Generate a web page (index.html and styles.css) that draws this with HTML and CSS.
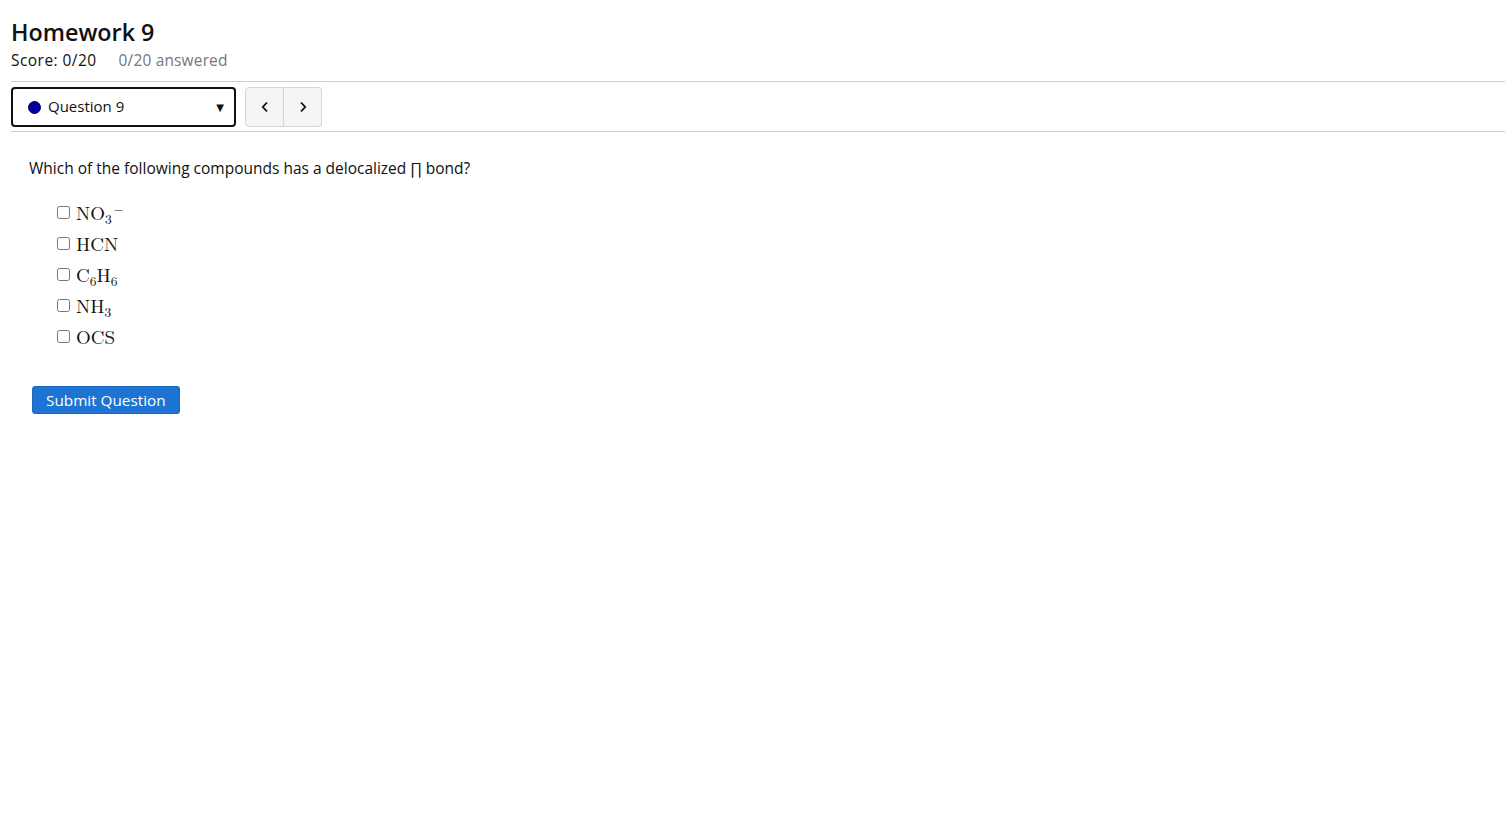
FILE: index.html
```html
<!DOCTYPE html>
<html>
<head>
<meta charset="utf-8">
<link rel="stylesheet" href="styles.css">
</head>
<body>
<div class="page">
  <header class="head">
    <h1 class="title">Homework 9</h1>
    <div class="scoreline">
      <span class="score">Score: 0/20</span>
      <span class="answered">0/20 answered</span>
    </div>
  </header>
  <div class="navbar">
    <div class="qselect">
      <span class="dot"></span>
      <span class="qlabel">Question 9</span>
      <span class="caret">&#9660;</span>
    </div>
    <div class="navbtns">
      <button class="navbtn" aria-label="previous">
        <svg width="10" height="12" viewBox="0 0 10 12"><path d="M7 1.5 L2.8 6 L7 10.5" fill="none" stroke="#111" stroke-width="1.8"/></svg>
      </button>
      <button class="navbtn" aria-label="next">
        <svg width="10" height="12" viewBox="0 0 10 12"><path d="M3 1.5 L7.2 6 L3 10.5" fill="none" stroke="#111" stroke-width="1.8"/></svg>
      </button>
    </div>
  </div>
  <main class="question">
    <p class="prompt">Which of the following compounds has a delocalized ∏ bond?</p>
    <ul class="choices">
      <li class="choice"><input type="checkbox"><span class="math">NO<sub>3</sub><sup>−</sup></span></li>
      <li class="choice"><input type="checkbox"><span class="math">HCN</span></li>
      <li class="choice"><input type="checkbox"><span class="math">C<sub>6</sub>H<sub>6</sub></span></li>
      <li class="choice"><input type="checkbox"><span class="math">NH<sub>3</sub></span></li>
      <li class="choice"><input type="checkbox"><span class="math">OCS</span></li>
    </ul>
    <button class="submit">Submit Question</button>
  </main>
</div>
</body>
</html>
```
FILE: styles.css
```css
html, body {
  margin: 0;
  padding: 0;
  background: #fff;
}
body {
  font-family: "Open Sans", "DejaVu Sans", sans-serif;
  color: #111;
}
.page {
  padding: 0 0 0 11px;
}
.head {
  padding-top: 18px;
  padding-bottom: 10px;
  border-bottom: 1px solid #cfcfcf;
}
.title {
  margin: 0 0 3px;
  font-size: 23.3px;
  font-weight: 600;
  line-height: 28px;
  color: #111;
}
.scoreline {
  font-size: 15.5px;
  line-height: 22px;
  display: flex;
  gap: 22px;
}
.score {
  letter-spacing: 0.45px;
}
.answered {
  color: #777;
  letter-spacing: 0.15px;
}
.navbar {
  display: flex;
  align-items: center;
  gap: 9px;
  padding: 5px 0 4px;
  border-bottom: 1px solid #cfcfcf;
}
.qselect {
  height: 36px;
  border: 2px solid #111;
  border-radius: 4px;
  display: flex;
  align-items: center;
  padding: 0 0 0 15px;
  box-sizing: content-box;
  width: 206px;
  font-size: 15px;
}
.dot {
  width: 13px;
  height: 13px;
  border-radius: 50%;
  background: #00009c;
  border: 1px solid #000050;
  box-sizing: border-box;
  margin-right: 7px;
}
.qlabel {
  flex: 1;
  padding-bottom: 2px;
}
.caret {
  font-size: 10px;
  margin-right: 10px;
}
.navbtns {
  display: flex;
}
.navbtn {
  width: 39px;
  height: 40px;
  background: #f5f5f5;
  border: 1px solid #d4d4d4;
  display: flex;
  align-items: center;
  justify-content: center;
  padding: 0;
}
.navbtn:first-child {
  border-radius: 4px 0 0 4px;
}
.navbtn:last-child {
  border-left: none;
  border-radius: 0 4px 4px 0;
  width: 38px;
}
.question {
  padding: 25px 0 0 18px;
}
.prompt {
  margin: 0;
  font-size: 15.5px;
  line-height: 22px;
}
.choices {
  list-style: none;
  margin: 18px 0 0;
  padding: 0 0 0 27px;
}
.choice {
  display: flex;
  align-items: center;
  height: 31px;
}
.choice input {
  margin: 0 6px 0 1px;
  width: 13px;
  height: 13px;
}
.math {
  font-family: "Latin Modern Roman", "DejaVu Serif", "Liberation Serif", serif;
  font-size: 19px;
}
.math sub {
  font-size: 13.5px;
  vertical-align: -4px;
  line-height: 0;
}
.math sup {
  font-size: 12px;
  vertical-align: 7px;
  line-height: 0;
  margin-left: 2px;
}
.submit {
  margin: 34px 0 0 3px;
  background: #1e74d2;
  color: #fff;
  border: 1px solid #1a66ba;
  border-radius: 3px;
  font-family: "Open Sans", sans-serif;
  font-size: 15.3px;
  padding: 3px 13px 3px;
  line-height: 20px;
}
```
